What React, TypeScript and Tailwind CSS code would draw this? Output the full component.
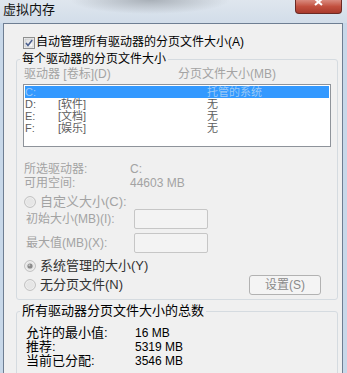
import React from "react";

function CheckBox() {
  return (
    <svg width="12" height="12" viewBox="0 0 12 12" className="shrink-0">
      <defs>
        <linearGradient id="cbg" x1="0" y1="0" x2="1" y2="1">
          <stop offset="0" stopColor="#dcdcdc" />
          <stop offset="1" stopColor="#ffffff" />
        </linearGradient>
      </defs>
      <rect x="0.5" y="0.5" width="11" height="11" fill="#f4f4f4" stroke="#8e8f8f" />
      <rect x="2" y="2" width="8" height="8" fill="url(#cbg)" stroke="#b9bcc0" strokeWidth="0.6" />
      <path d="M3 6 L5 8.5 L9.2 3" fill="none" stroke="#4a5f8f" strokeWidth="1.6" />
    </svg>
  );
}

function Radio({ checked }: { checked?: boolean }) {
  return (
    <svg width="12" height="12" viewBox="0 0 12 12" className="shrink-0">
      <circle cx="6" cy="6" r="5.4" fill="#f2f2f2" stroke="#bdbdbd" />
      <circle cx="6" cy="6" r="4" fill="#e6e6e6" />
      {checked && <circle cx="6" cy="6" r="2.6" fill="#8a8a8a" />}
      {checked && <circle cx="5.3" cy="5.2" r="1" fill="#c2c2c2" />}
    </svg>
  );
}

const rows = [
  { d: "D:", label: "[软件]", size: "无" },
  { d: "E:", label: "[文档]", size: "无" },
  { d: "F:", label: "[娱乐]", size: "无" },
];

export default function App() {
  return (
    <div className="h-[373px] w-[347px] overflow-hidden bg-[#c8d8e9] font-['Liberation_Sans','Noto_Sans_CJK_SC',sans-serif] text-[12px] leading-[12px] text-black">
      {/* title bar */}
      <div className="flex h-[23px] items-start justify-between bg-[radial-gradient(ellipse_80px_14px_at_150px_0px,#a9b0b8,transparent),linear-gradient(to_bottom,#dfe6ee,#d2dde9)] pl-[3px] pr-[5px]">
        <span className="mt-[3px] text-[13px] leading-[14px] text-[#111]">虚拟内存</span>
        <div className="h-[14px] w-[47px] rounded-b-[4px] border border-t-0 border-[#6b2a24] bg-gradient-to-b from-[#d98a7e] via-[#c2503f] to-[#a93a2c]">
          <svg width="45" height="13" viewBox="0 0 45 13">
            <path d="M19 -1 L26 5 M26 -1 L19 5" stroke="#ffffff" strokeWidth="2" />
          </svg>
        </div>
      </div>

      {/* window body */}
      <div className="ml-[3px] h-[360px] w-[340px] border border-[#6e7e92] bg-[#f0f0f0]">
        <div className="mt-[12px] flex items-center gap-[1px] pl-[19px] leading-[13px]">
          <CheckBox />
          <span>自动管理所有驱动器的分页文件大小(A)</span>
        </div>

        <fieldset className="ml-[12px] mt-[3px] w-[322px] rounded-[3px] border border-[#d5dbe0] pb-[4px]">
          <legend className="ml-[3px] px-[2px] leading-[14px]">每个驱动器的分页文件大小</legend>

          <div className="mt-[2px] flex pl-[7px] leading-[13px] text-[#a3a3a3]">
            <span className="w-[154px]">驱动器 [卷标](D)</span>
            <span>分页文件大小(MB)</span>
          </div>

          <div className="ml-[6px] mt-[3px] h-[63px] w-[308px] border border-[#8e939a] bg-white p-[1px] text-[11px]">
            <div className="flex h-[12px] bg-[#3399ff] text-[#9cc9f6]">
              <span className="w-[33px]">C:</span>
              <span className="w-[149px]"></span>
              <span>托管的系统</span>
            </div>
            {rows.map((r) => (
              <div key={r.d} className="flex h-[12px] text-[#5c5c5c]">
                <span className="w-[33px]">{r.d}</span>
                <span className="w-[149px]">{r.label}</span>
                <span>{r.size}</span>
              </div>
            ))}
          </div>

          <div className="mt-[15px] pl-[7px] leading-[14px] text-[#a3a3a3]">
            <div className="flex">
              <span className="w-[106px]">所选驱动器:</span>
              <span>C:</span>
            </div>
            <div className="flex">
              <span className="w-[106px]">可用空间:</span>
              <span>44603 MB</span>
            </div>
          </div>

          <div className="mt-[5px] flex items-center gap-[4px] pl-[7px] text-[13px] leading-[14px] text-[#a3a3a3]">
            <Radio />
            <span>自定义大小(C):</span>
          </div>

          <div className="flex h-[20px] items-center pl-[9px] text-[#a3a3a3]">
            <span className="w-[108px]">初始大小(MB)(I):</span>
            <div className="h-[20px] w-[74px] rounded-[2px] border border-[#c6c6c6] bg-[#f3f3f3]" />
          </div>
          <div className="mt-[4px] flex h-[20px] items-center pl-[9px] text-[#a3a3a3]">
            <span className="w-[108px]">最大值(MB)(X):</span>
            <div className="h-[20px] w-[74px] rounded-[2px] border border-[#c6c6c6] bg-[#f3f3f3]" />
          </div>

          <div className="mt-[6px] flex items-center gap-[4px] pl-[7px] text-[13px] leading-[14px] text-[#333]">
            <Radio checked />
            <span>系统管理的大小(Y)</span>
          </div>

          <div className="mt-[2px] flex h-[20px] items-center justify-between pl-[7px] pr-[16px]">
            <div className="flex items-center gap-[4px] text-[13px] leading-[14px] text-[#333]">
              <Radio />
              <span>无分页文件(N)</span>
            </div>
            <div className="flex h-[20px] w-[72px] items-center justify-center rounded-[3px] border border-[#b2b2b2] bg-[#f4f4f4] text-[#8a8a8a]">
              设置(S)
            </div>
          </div>
        </fieldset>

        <fieldset className="ml-[12px] mt-[4px] w-[322px] rounded-[3px] border border-[#d5dbe0] pb-[20px]">
          <legend className="ml-[3px] px-[2px] text-[13px] leading-[14px]">所有驱动器分页文件大小的总数</legend>
          <div className="mt-[8px] pl-[9px] leading-[14px]">
            <div className="flex">
              <span className="w-[109px] text-[13px]">允许的最小值:</span>
              <span>16 MB</span>
            </div>
            <div className="flex">
              <span className="w-[109px] text-[13px]">推荐:</span>
              <span>5319 MB</span>
            </div>
            <div className="flex">
              <span className="w-[109px] text-[13px]">当前已分配:</span>
              <span>3546 MB</span>
            </div>
          </div>
        </fieldset>
      </div>
    </div>
  );
}
